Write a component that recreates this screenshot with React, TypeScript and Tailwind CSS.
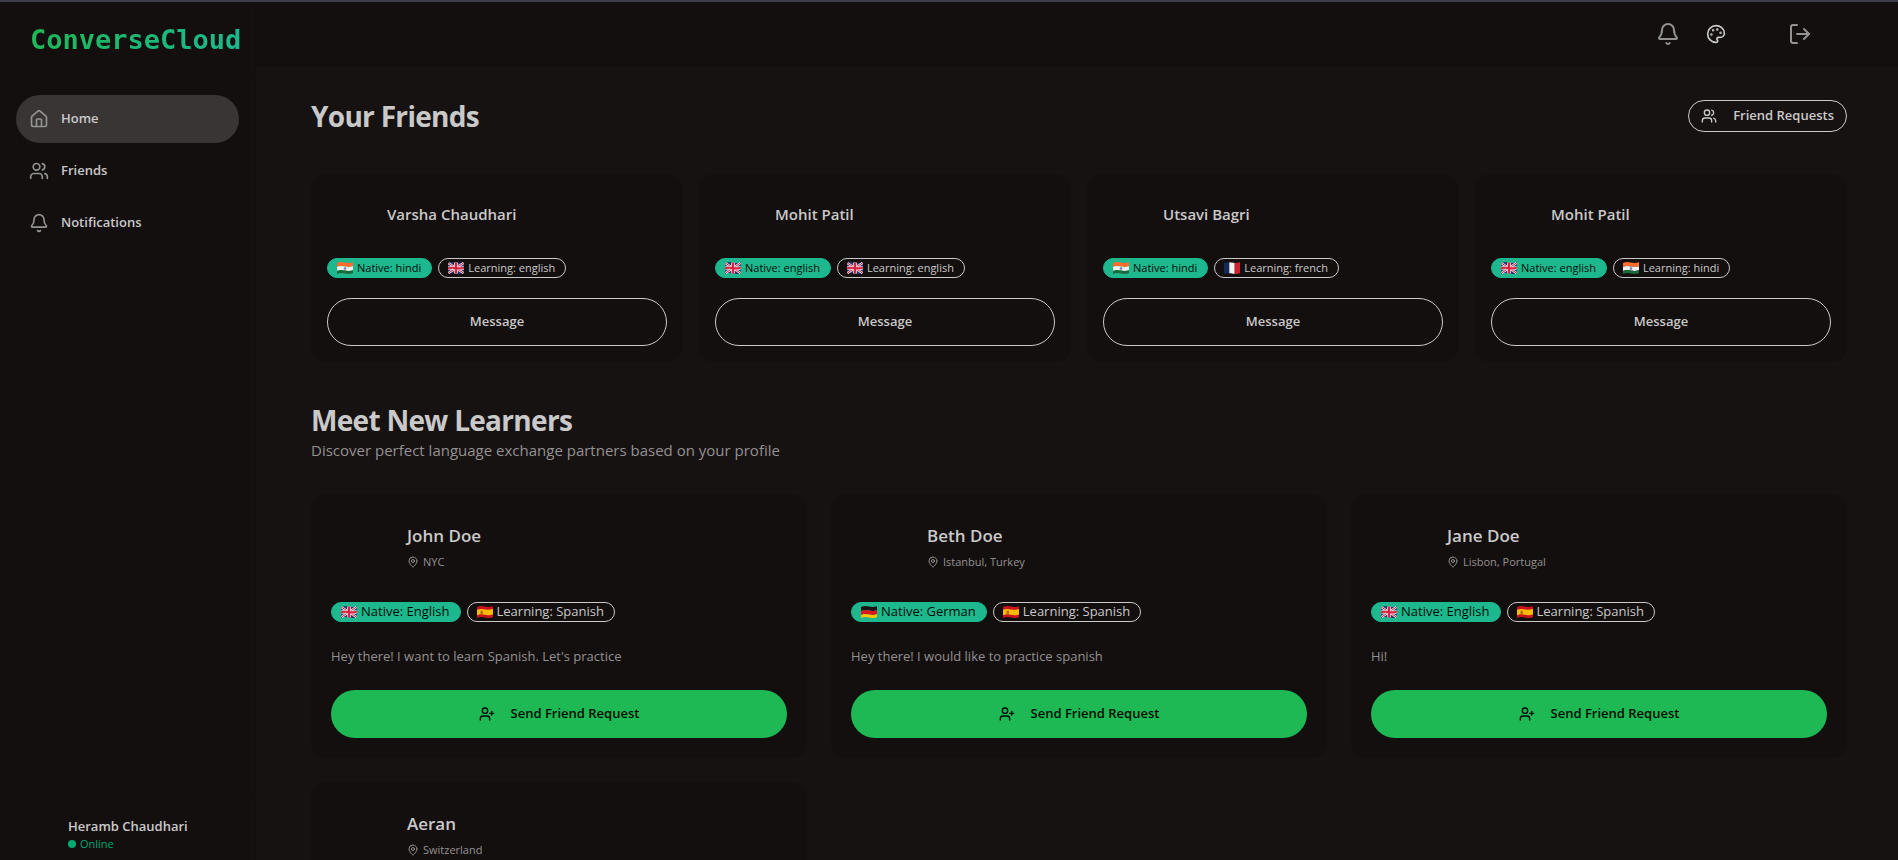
import React from 'react';
import { Bell, House, LogOut, MapPin, Palette, UserPlus, Users } from 'lucide-react';

type Language = 'hindi' | 'english' | 'french' | 'german' | 'spanish';

type Friend = {
  id: number;
  name: string;
  native: string;
  learning: string;
};

type Learner = {
  id: number;
  name: string;
  location: string;
  // missing until the profile has been completed
  profile?: { native: string; learning: string; bio: string };
};

const friends: Friend[] = [
  { id: 1, name: 'Varsha Chaudhari', native: 'hindi', learning: 'english' },
  { id: 2, name: 'Mohit Patil', native: 'english', learning: 'english' },
  { id: 3, name: 'Utsavi Bagri', native: 'hindi', learning: 'french' },
  { id: 4, name: 'Mohit Patil', native: 'english', learning: 'hindi' },
];

const learners: Learner[] = [
  {
    id: 1,
    name: 'John Doe',
    location: 'NYC',
    profile: {
      native: 'English',
      learning: 'Spanish',
      bio: "Hey there! I want to learn Spanish. Let's practice",
    },
  },
  {
    id: 2,
    name: 'Beth Doe',
    location: 'Istanbul, Turkey',
    profile: {
      native: 'German',
      learning: 'Spanish',
      bio: 'Hey there! I would like to practice spanish',
    },
  },
  {
    id: 3,
    name: 'Jane Doe',
    location: 'Lisbon, Portugal',
    profile: { native: 'English', learning: 'Spanish', bio: 'Hi!' },
  },
  { id: 4, name: 'Aeran', location: 'Switzerland' },
];

// Flag artwork, each on a 16x12 canvas
const flagArt: Record<Language, React.ReactNode> = {
  hindi: (
    <>
      <path fill="#ff6c2d" d="M0 1C3-.2 5 0 8 .6s5 .6 8-.4v4c-3 1-5 1-8 .4S3 3.800 0 5z" />
      <path fill="#f2f2f2" d="M0 5c3-1.200 5-1 8-.4s5 .6 8-.4v4c-3 1-5 1-8 .4S3 7.800 0 9z" />
      <path fill="#1c6b3c" d="M0 9c3-1.200 5-1 8-.4s5 .6 8-.4v3c-3 1-5 1-8 .4S3 10.800 0 12z" />
      <circle cx="8" cy="6.500" r="1.300" fill="#6f7fb5" />
    </>
  ),
  english: (
    <>
      <path fill="#1f3a73" d="M0 1C3-.2 5 0 8 .6s5 .6 8-.4v11c-3 1-5 1-8 .4S3 10.800 0 12z" />
      <path stroke="#f0e8ec" strokeWidth="2.400" d="M.5 1.200l15 9.800M15.500 1L.5 11" />
      <path stroke="#d8203f" strokeWidth="1" d="M.5 1.200l15 9.800M15.500 1L.5 11" />
      <path stroke="#f0e8ec" strokeWidth="3.600" d="M8 .6v11M0 6.400c3-1 5-.8 8-.3s5 .5 8-.4" />
      <path stroke="#d8203f" strokeWidth="2.200" d="M8 .6v11M0 6.400c3-1 5-.8 8-.3s5 .5 8-.4" />
    </>
  ),
  french: (
    <>
      <path fill="#12295c" d="M0 1C2 .2 3.500 0 5.300.2v11C3.500 11 2 11.200 0 12z" />
      <path fill="#f2f2f2" d="M5.300.2c2 .1 3.500.6 5.400.8v11c-1.900-.2-3.400-.7-5.400-.8z" />
      <path fill="#d01f33" d="M10.700 1c1.800.1 3.300-.2 5.300-.8v11c-2 .6-3.500.9-5.300.8z" />
    </>
  ),
  german: (
    <>
      <path fill="#1a1414" d="M0 1C3-.2 5 0 8 .6s5 .6 8-.4v4c-3 1-5 1-8 .4S3 3.800 0 5z" />
      <path fill="#d8141c" d="M0 5c3-1.200 5-1 8-.4s5 .6 8-.4v4c-3 1-5 1-8 .4S3 7.800 0 9z" />
      <path fill="#fbc200" d="M0 9c3-1.200 5-1 8-.4s5 .6 8-.4v3c-3 1-5 1-8 .4S3 10.800 0 12z" />
    </>
  ),
  spanish: (
    <>
      <path fill="#c91420" d="M0 1C3-.2 5 0 8 .6s5 .6 8-.4v11c-3 1-5 1-8 .4S3 10.800 0 12z" />
      <path fill="#fbbc00" d="M0 3.800c3-1.200 5-1 8-.4s5 .6 8-.4v5.400c-3 1-5 1-8 .4s-5-.8-8 .4z" />
      <path fill="#b5651d" d="M3.500 4.800h2.500v3H3.500z" />
    </>
  ),
};

const Flag = ({ language }: { language: string }) => {
  const key = language.toLowerCase() as Language;
  return (
    <svg width="16" height="12" viewBox="0 0 16 12" fill="none" className="mr-1 shrink-0" aria-hidden="true">
      {flagArt[key]}
    </svg>
  );
};

type BadgesProps = {
  native: string;
  learning: string;
  textClass: string;
};

const LanguageBadges = ({ native, learning, textClass }: BadgesProps) => {
  return (
    <div className={`flex flex-wrap gap-1.5 ${textClass}`}>
      <span className="flex h-5 items-center rounded-full border border-[#1db88e] bg-[#1db88e] pr-2.5 pl-[9px] text-[#010d07]">
        <Flag language={native} />
        Native: {native}
      </span>
      <span className="flex h-5 items-center rounded-full border border-[#cac9c9] pr-2.5 pl-[9px]">
        <Flag language={learning} />
        Learning: {learning}
      </span>
    </div>
  );
};

const FriendCard = ({ friend }: { friend: Friend }) => {
  return (
    <div className="rounded-2xl bg-[#130f0e] p-4">
      <div className="mb-5 flex items-center gap-3">
        <div className="size-12 rounded-full" />
        <h3 className="truncate text-[15px] font-semibold">{friend.name}</h3>
      </div>
      <LanguageBadges native={friend.native} learning={friend.learning} textClass="text-[11px]" />
      <button className="mt-5 h-12 w-full rounded-full border border-[#cac9c9] text-[13px] font-semibold">
        Message
      </button>
    </div>
  );
};

const LearnerCard = ({ learner }: { learner: Learner }) => {
  const { name, location, profile } = learner;
  return (
    <div className="rounded-2xl bg-[#130f0e] p-5">
      <div className="flex items-center gap-3">
        <div className="size-16 rounded-full" />
        <div>
          <h3 className="text-[17px] leading-7 font-semibold">{name}</h3>
          <div className="mt-1 flex items-center text-[11px] leading-4 text-[#939191]">
            <MapPin className="mr-1 size-3" />
            {location}
          </div>
        </div>
      </div>
      {profile && (
        <div className="mt-6 space-y-6">
          <LanguageBadges native={profile.native} learning={profile.learning} textClass="text-[13px]" />
          <p className="text-[13px] leading-5 text-[#939191]">{profile.bio}</p>
          <button className="flex h-12 w-full items-center justify-center gap-4 rounded-full bg-[#1eb854] text-[13px] font-semibold text-[#000c02]">
            <UserPlus className="size-4" />
            Send Friend Request
          </button>
        </div>
      )}
    </div>
  );
};

const Sidebar = () => {
  return (
    <aside className="flex w-64 shrink-0 flex-col border-r border-[#110d0d] bg-[#140f0f]">
      <div className="border-b border-[#110d0d] py-5 pl-[30px]">
        <a
          href="#"
          className="block w-fit bg-gradient-to-r from-[#1eb854] to-[#1db88e] bg-clip-text font-['DejaVu_Sans_Mono',monospace] text-[27px] leading-9 font-bold text-transparent"
        >
          ConverseCloud
        </a>
      </div>
      <nav className="flex flex-1 flex-col gap-1 p-4 text-[13px] font-semibold">
        <a href="#home" className="flex h-12 items-center gap-3 rounded-full bg-[#393534] px-[13px]">
          <House className="size-5 text-[#939191]" />
          Home
        </a>
        <a href="#friends" className="flex h-12 items-center gap-3 rounded-full px-[13px]">
          <Users className="size-5 text-[#939191]" />
          Friends
        </a>
        <a href="#notifications" className="flex h-12 items-center gap-3 rounded-full px-[13px]">
          <Bell className="size-5 text-[#939191]" />
          Notifications
        </a>
      </nav>
      {/* Profile */}
      <div className="flex items-center gap-3 border-t border-[#110d0d] px-4 pt-4 pb-1.5">
        <div className="size-10 rounded-full" />
        <div>
          <p className="text-[13px] leading-5 font-semibold">Heramb Chaudhari</p>
          <p className="flex items-center gap-1 text-[11px] leading-4 text-[#00a96e]">
            <span className="size-2 rounded-full bg-[#00a96e]" />
            Online
          </p>
        </div>
      </div>
    </aside>
  );
};

const Navbar = () => {
  return (
    <header className="flex h-16 shrink-0 items-center justify-end border-b border-[#110d0d] bg-[#140f0f] pr-[86px]">
      <button aria-label="Notifications" className="text-[#939191]">
        <Bell className="size-6" />
      </button>
      <button aria-label="Theme" className="ml-[26px]">
        <Palette className="size-5" />
      </button>
      <button aria-label="Log out" className="ml-[62px] text-[#939191]">
        <LogOut className="size-6" />
      </button>
    </header>
  );
};

const App = () => {
  return (
    <div className="flex h-screen overflow-hidden border-t-2 border-[#3f3d49] bg-[#171212] font-['Open_Sans','Noto_Sans',sans-serif] text-[#cac9c9]">
      <Sidebar />
      <div className="flex min-w-0 flex-1 flex-col">
        <Navbar />
        <main className="flex-1 space-y-10 overflow-hidden pt-8 pr-[51px] pl-[55px]">
          <div className="flex items-center justify-between">
            <h2 className="text-[28px] leading-9 font-bold tracking-tight">Your Friends</h2>
            <button className="flex h-8 items-center gap-4 rounded-full border border-[#cac9c9] px-3 text-[13px] font-semibold">
              <Users className="size-4" />
              Friend Requests
            </button>
          </div>
          <div className="grid grid-cols-4 gap-4">
            {friends.map((friend) => (
              <FriendCard key={friend.id} friend={friend} />
            ))}
          </div>
          <section>
            <h2 className="text-[28px] leading-9 font-bold tracking-tight">Meet New Learners</h2>
            <p className="text-[15px] leading-6 text-[#939191]">
              Discover perfect language exchange partners based on your profile
            </p>
            <div className="mt-8 grid grid-cols-3 items-start gap-6">
              {learners.map((learner) => (
                <LearnerCard key={learner.id} learner={learner} />
              ))}
            </div>
          </section>
        </main>
      </div>
    </div>
  );
};

export default App;
